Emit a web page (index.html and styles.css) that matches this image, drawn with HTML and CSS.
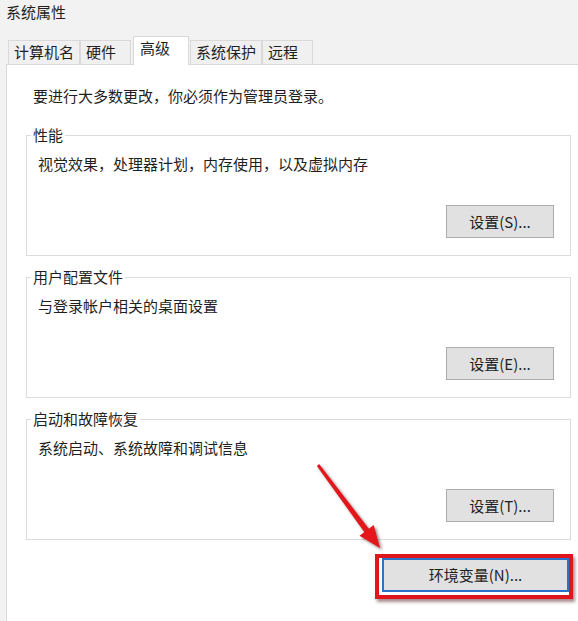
FILE: index.html
```html
<!DOCTYPE html>
<html lang="zh-CN">
<head>
<meta charset="utf-8">
<title>系统属性</title>
<link rel="stylesheet" href="styles.css">
</head>
<body>
  <div class="window">
    <div class="title">系统属性</div>

    <div class="tabs">
      <div class="tab">计算机名</div>
      <div class="tab">硬件</div>
      <div class="tab active">高级</div>
      <div class="tab">系统保护</div>
      <div class="tab">远程</div>
    </div>

    <div class="panel">
      <p class="intro">要进行大多数更改，你必须作为管理员登录。</p>

      <fieldset class="group">
        <legend>性能</legend>
        <p class="desc">视觉效果，处理器计划，内存使用，以及虚拟内存</p>
        <button class="btn" type="button">设置(S)...</button>
      </fieldset>

      <fieldset class="group">
        <legend>用户配置文件</legend>
        <p class="desc">与登录帐户相关的桌面设置</p>
        <button class="btn" type="button">设置(E)...</button>
      </fieldset>

      <fieldset class="group">
        <legend>启动和故障恢复</legend>
        <p class="desc">系统启动、系统故障和调试信息</p>
        <button class="btn" type="button">设置(T)...</button>
      </fieldset>

      <div class="actions">
        <div class="env-wrap">
          <button class="btn btn-default" type="button">环境变量(N)...</button>
          <span class="highlight"></span>
        </div>
      </div>
    </div>
  </div>

  <svg class="arrow" width="578" height="621" viewBox="0 0 578 621">
    <polygon points="319.1,464.1 316.9,465.9 364.8,532.7 369.2,529.3" fill="#e3161c"/>
    <polygon points="380,548 359.5,535.8 373.7,525.1" fill="#e3161c"/>
  </svg>
</body>
</html>
```

FILE: styles.css
```css
html, body {
  margin: 0;
  padding: 0;
}

body {
  width: 578px;
  height: 621px;
  overflow: hidden;
  background: #f2f2f2;
  color: #1f1f1f;
  font-family: "Noto Sans CJK SC", "Microsoft YaHei", sans-serif;
  font-size: 15px;
  line-height: 20px;
}

.window {
  display: flex;
  flex-direction: column;
  height: 621px;
}

.title {
  height: 36px;
  padding: 2px 6px 0;
  box-sizing: border-box;
}

/* tab strip */
.tabs {
  position: relative;
  z-index: 1;
  display: flex;
  align-items: flex-end;
  height: 29px;
  padding-left: 8px;
  margin-bottom: -1px;
}

.tab {
  box-sizing: border-box;
  height: 25px;
  min-width: 51px;
  padding: 1px 5px 0;
  border: 1px solid #d9d9d9;
  background: #f0f0f0;
  white-space: nowrap;
}

.tab.active {
  height: 29px;
  min-width: 56px;
  margin: 0 1px 0 2px;
  padding: 1px 6px 0;
  border-bottom: none;
  background: #ffffff;
}

/* white page under the tabs */
.panel {
  flex: 1;
  margin-left: 6px;
  margin-right: -20px;
  padding: 21px 0 0 19px;
  border-top: 1px solid #d9d9d9;
  border-left: 1px solid #d9d9d9;
  background: #ffffff;
}

.intro {
  margin: 0 0 19px;
  padding-left: 7px;
}

/* group boxes */
.group {
  box-sizing: border-box;
  width: 545px;
  margin: 0 0 11px;
  padding: 9px 16px 17px 11px;
  border: 1px solid #dcdcdc;
  display: flex;
  flex-direction: column;
  min-width: 0;
}

.group legend {
  margin-left: -7px;
  padding: 0 2px;
  line-height: 20px;
}

.desc {
  margin: 0;
}

.btn {
  box-sizing: border-box;
  align-self: flex-end;
  width: 108px;
  height: 33px;
  margin-top: 31px;
  padding: 0;
  border: 1px solid #adadad;
  background: #e1e1e1;
  color: #1f1f1f;
  font: inherit;
  text-align: center;
}

.actions {
  display: flex;
  justify-content: flex-end;
  width: 545px;
  margin-top: 18px;
}

.env-wrap {
  position: relative;
  margin-right: 2px;
}

.btn-default {
  width: 187px;
  height: 34px;
  margin-top: 0;
  border: 2px solid #2b72c9;
}

/* red callout frame around the environment-variables button */
.highlight {
  position: absolute;
  top: -4px;
  right: -4px;
  bottom: -7px;
  left: -7px;
  border: 4px solid #e0161d;
  box-shadow: 2px 3px 3px rgba(60, 0, 0, 0.45);
  pointer-events: none;
}

/* pointer arrow drawn over the dialog */
.arrow {
  position: absolute;
  top: 0;
  left: 0;
  pointer-events: none;
  filter: drop-shadow(2px 2px 1.5px rgba(60, 0, 0, 0.5));
}
```
